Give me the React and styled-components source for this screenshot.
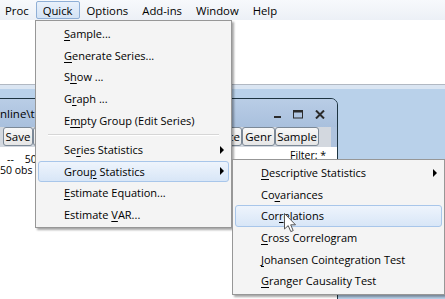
import React from 'react';
import styled, { createGlobalStyle, css } from 'styled-components';

const GlobalStyle = createGlobalStyle`
  html, body {
    margin: 0;
    padding: 0;
    background: #fff;
  }
  body {
    font-family: "Open Sans", "Noto Sans", sans-serif;
    font-size: 11px;
    color: #000;
  }
`;

const Screen = styled.div`
  position: relative;
  width: 445px;
  height: 299px;
  overflow: hidden;
  display: flex;
  flex-direction: column;
  background: #fff;
`;

const MenuBar = styled.div`
  display: flex;
  align-items: stretch;
  height: 20px;
  margin-left: -2px;
  font-size: 11.3px;
  background: linear-gradient(#f7f9fc, #ecf0f6);
`;

const BarItem = styled.div`
  display: flex;
  align-items: center;
  padding: 0 6px;
  margin: 1px 0 1px;
  border: 1px solid transparent;
  border-radius: 2px;
  ${({ $open }) => $open && css`
    background: linear-gradient(#e9f1fb, #d3e2f4);
    border-color: #8fafd6;
  `}
`;

const CommandPane = styled.div`
  height: 64px;
  background: #fff;
`;

const Splitter = styled.div`
  height: 4px;
  border-top: 1px solid #b1b8c2;
  background: #dae5f2;
`;

const Desktop = styled.div`
  position: relative;
  flex: 1;
  background: #b9d1ea;
`;

const DocWindow = styled.div`
  position: absolute;
  top: 9px;
  left: -5px;
  width: 341px;
  bottom: -30px;
  display: flex;
  flex-direction: column;
  border: 1px solid #1d3441;
  border-top-right-radius: 7px;
  background: #aec3de;
`;

const TitleBar = styled.div`
  display: flex;
  align-items: center;
  height: 28px;
  padding: 0 12px 0 4px;
  font-size: 11.5px;
  background: linear-gradient(#b9cde6, #a9c0dd);
  border-top-right-radius: 6px;
`;

const TitleText = styled.span`
  flex: 1;
  white-space: nowrap;
  overflow: hidden;
`;

const Caption = styled.div`
  display: flex;
  align-items: center;
  gap: 12px;
  padding-top: 2px;
`;

const Toolbar = styled.div`
  display: flex;
  height: 20px;
  margin-right: 6px;
  padding-left: 7px;
  background: #d3d8df;
`;

const ToolButton = styled.div`
  box-sizing: border-box;
  width: ${({ $w }) => $w}px;
  height: 19px;
  display: flex;
  align-items: center;
  justify-content: center;
  font-size: 11.5px;
  white-space: nowrap;
  border: 1px solid #7c8997;
  border-radius: 3px;
  background: linear-gradient(#f8f8f8, #e6e6e6);
`;

const InfoArea = styled.div`
  flex: 1;
  display: flex;
  justify-content: space-between;
  background: #fff;
  font-size: 10.5px;
`;

const InfoLines = styled.div`
  padding-top: 7px;
`;

const InfoLine = styled.div`
  height: 11px;
  line-height: 11px;
  white-space: pre;
  padding-left: ${({ $indent }) => $indent}px;
`;

const FilterText = styled.div`
  padding: 3px 11px 0 0;
  line-height: 11px;
`;

const Dropdown = styled.div`
  position: absolute;
  top: ${({ $top }) => $top}px;
  left: ${({ $left }) => $left}px;
  width: ${({ $width }) => $width}px;
  box-sizing: border-box;
  padding: 2px;
  background: #f4f4f4;
  border: 1px solid #979797;
  box-shadow: 2px 2px 2px rgba(0, 0, 0, 0.35);
`;

const Item = styled.div`
  box-sizing: border-box;
  height: 21.6px;
  display: flex;
  align-items: center;
  padding-left: 25px;
  border: 1px solid transparent;
  border-radius: 3px;
  white-space: nowrap;
  ${({ $active }) => $active && css`
    background: linear-gradient(#eef4fc, #d8e6f7);
    border-color: #a8c6ea;
  `}
  u {
    text-decoration-thickness: 1px;
    text-underline-offset: 2px;
  }
`;

const Arrow = styled.span`
  margin-left: auto;
  margin-right: 4px;
  width: 0;
  height: 0;
  border-left: 4px solid #000;
  border-top: 4px solid transparent;
  border-bottom: 4px solid transparent;
`;

const Separator = styled.div`
  margin: 3px 10px 3px 10px;
  border-top: 1px solid #d6d6d6;
  border-bottom: 1px solid #fff;
`;

const Pointer = styled.svg`
  position: absolute;
  left: 284px;
  top: 213px;
`;

const quickItems = [
  ['S', 'ample...'],
  ['G', 'enerate Series...'],
  ['S', 'h', 'ow ...'],
  ['G', 'r', 'aph ...'],
  ['E', 'm', 'pty Group (Edit Series)'],
];

const Label = ({ parts }) => {
  if (parts.length === 2) {
    return <span><u>{parts[0]}</u>{parts[1]}</span>;
  }
  return <span>{parts[0]}<u>{parts[1]}</u>{parts[2]}</span>;
};

const MinimizeGlyph = () => (
  <svg width="7" height="9" viewBox="0 0 7 9">
    <rect x="0" y="6" width="7" height="2" fill="#2b2b2b" />
  </svg>
);

const MaximizeGlyph = () => (
  <svg width="10" height="9" viewBox="0 0 10 9">
    <rect x="0.5" y="0.5" width="9" height="7.5" fill="none" stroke="#2b2b2b" strokeWidth="1" />
    <rect x="0.5" y="0.5" width="9" height="2" fill="#2b2b2b" />
  </svg>
);

const CloseGlyph = () => (
  <svg width="10" height="9" viewBox="0 0 10 9">
    <path d="M1 0.5 L9 8.5 M9 0.5 L1 8.5" stroke="#2b2b2b" strokeWidth="2" />
  </svg>
);

const App = () => (
  <>
    <GlobalStyle />
    <Screen>
      <MenuBar>
        <BarItem>Proc</BarItem>
        <BarItem $open>Quick</BarItem>
        <BarItem>Options</BarItem>
        <BarItem>Add-ins</BarItem>
        <BarItem>Window</BarItem>
        <BarItem>Help</BarItem>
      </MenuBar>
      <CommandPane />
      <Splitter />
      <Desktop>
        <DocWindow>
          <TitleBar>
            <TitleText>nline\test.wf1)</TitleText>
            <Caption>
              <MinimizeGlyph />
              <MaximizeGlyph />
              <CloseGlyph />
            </Caption>
          </TitleBar>
          <Toolbar>
            <ToolButton $w={30}>Save</ToolButton>
            <ToolButton $w={40}>Freeze</ToolButton>
            <ToolButton $w={58}>Details+/-</ToolButton>
            <ToolButton $w={36}>Show</ToolButton>
            <ToolButton $w={36}>Fetch</ToolButton>
            <ToolButton $w={39}>Delete</ToolButton>
            <ToolButton $w={33}>Genr</ToolButton>
            <ToolButton $w={44}>Sample</ToolButton>
          </Toolbar>
          <InfoArea>
            <InfoLines>
              <InfoLine $indent={11}>{'--    50'}</InfoLine>
              <InfoLine $indent={4}>{'50 obs'}</InfoLine>
            </InfoLines>
            <FilterText>Filter: *</FilterText>
          </InfoArea>
        </DocWindow>
      </Desktop>

      <Dropdown $top={20} $left={35} $width={197}>
        {quickItems.map((parts, i) => (
          <Item key={i}><Label parts={parts} /></Item>
        ))}
        <Separator />
        <Item><Label parts={['Se', 'r', 'ies Statistics']} /><Arrow /></Item>
        <Item $active><Label parts={['Grou', 'p', ' Statistics']} /><Arrow /></Item>
        <Item><Label parts={['E', 'stimate Equation...']} /></Item>
        <Item><Label parts={['Estimate ', 'V', 'AR...']} /></Item>
      </Dropdown>

      <Dropdown $top={159} $left={232} $width={213}>
        <Item><Label parts={['D', 'escriptive Statistics']} /><Arrow /></Item>
        <Item><Label parts={['Co', 'v', 'ariances']} /></Item>
        <Item $active><Label parts={['Cor', 'r', 'elations']} /></Item>
        <Item><Label parts={['C', 'ross Correlogram']} /></Item>
        <Item><Label parts={['J', 'ohansen Cointegration Test']} /></Item>
        <Item><Label parts={['G', 'ranger Causality Test']} /></Item>
      </Dropdown>

      <Pointer width="13" height="20" viewBox="0 0 13 20">
        <path
          d="M0.5 0.5 L0.5 16 L4.2 12.6 L6.8 18.6 L9.2 17.6 L6.7 11.8 L11.5 11.8 Z"
          fill="#fff"
          stroke="#555"
          strokeWidth="1"
          strokeLinejoin="round"
        />
      </Pointer>
    </Screen>
  </>
);

export default App;
